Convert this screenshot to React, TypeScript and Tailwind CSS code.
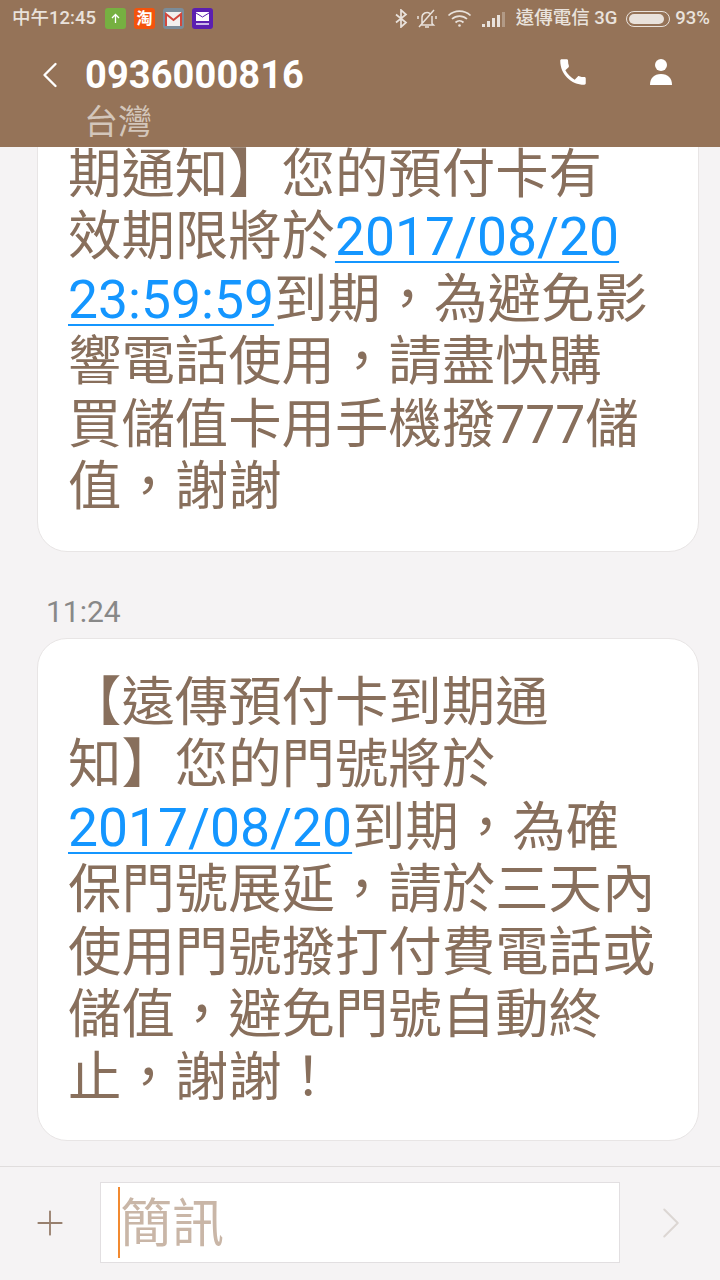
import { ChevronLeft, ChevronRight, Plus } from 'lucide-react';

const Link = ({ children }: { children: string }) => (
  <span className="text-[#1496ff] underline decoration-2 underline-offset-[6px]">{children}</span>
);

function Line({ children }: { children: React.ReactNode }) {
  return <div className="h-[62.5px] leading-[62.5px] whitespace-nowrap">{children}</div>;
}

function Bubble({ children, className }: { children: React.ReactNode; className: string }) {
  return (
    <div className={`mx-[37px] w-[662px] shrink-0 rounded-[30px] border border-[#e8e5e5] bg-white pl-[30px] text-[53.4px] text-[#886f5c] ${className}`}>
      {children}
    </div>
  );
}

function StatusBar() {
  return (
    <div className="flex h-[36px] items-center pl-[12px] pr-[10px] pt-[1px] text-[18.5px] font-medium text-[#e9e2dc]">
      <span>中午12:45</span>
      <div className="ml-[9px] flex items-center gap-[8px]">
        <div className="flex h-[21px] w-[21px] items-center justify-center rounded-[3px] bg-[#76b041]">
          <svg width="13" height="13" viewBox="0 0 13 13" fill="none" stroke="white" strokeWidth="1.3">
            <path d="M6.500 11V2.500M3 6l3.500-3.500L10 6" />
          </svg>
        </div>
        <div className="flex h-[21px] w-[21px] items-center justify-center rounded-[3px] bg-[#f4530c] text-[16px] font-bold leading-none text-white">
          淘
        </div>
        <div className="flex h-[21px] w-[21px] items-center justify-center rounded-[3px] bg-[#7b8c99]">
          <svg width="17" height="14" viewBox="0 0 17 14">
            <rect width="17" height="14" rx="1" fill="#f2f0ee" />
            <path d="M1 14V2l7.500 6L16 2v12" fill="none" stroke="#d2473c" strokeWidth="2" />
          </svg>
        </div>
        <div className="flex h-[21px] w-[21px] flex-col items-center justify-center gap-[2px] rounded-[3px] bg-[#5b1fb0]">
          <svg width="13" height="9" viewBox="0 0 13 9">
            <rect width="13" height="9" fill="white" />
            <path d="M0 1l6.500 4L13 1" fill="none" stroke="#5b1fb0" strokeWidth="1" />
          </svg>
          <div className="h-[2px] w-[13px] bg-[#cbb8ea]" />
        </div>
      </div>
      <div className="ml-auto flex items-center">
        <svg width="14" height="19" viewBox="0 0 14 19" fill="none" stroke="#e9e2dc" strokeWidth="1.700">
          <path d="M2 5.500l10 8-5 4.500V1l5 4.500-10 8" />
        </svg>
        <svg className="ml-[8px]" width="22" height="20" viewBox="0 0 22 20" fill="none" stroke="#e9e2dc" strokeWidth="1.500">
          <path d="M6 14.500V8.500a5 5 0 0 1 8-4M16 7v7.500l1.500 1.500h-13M9 18h4M2 10V7M20 10V7M3 18 18 1" />
        </svg>
        <svg className="ml-[9px]" width="26" height="19" viewBox="0 0 25 19" fill="none" stroke="#e9e2dc" strokeWidth="1.700">
          <path d="M1 6.500a16 16 0 0 1 22 0M4.500 10a11 11 0 0 1 15 0M8 13.500a6 6 0 0 1 8 0" />
          <circle cx="12" cy="16.500" r="1.300" fill="#e9e2dc" stroke="none" />
        </svg>
        <svg className="ml-[9px]" width="23" height="16" viewBox="0 0 23 16" fill="#e9e2dc">
          <rect x="0" y="13" width="3" height="3" />
          <rect x="5" y="10" width="3" height="6" />
          <rect x="10" y="7" width="3" height="9" />
          <rect x="15" y="4" width="3" height="12" />
          <rect x="20" y="1" width="3" height="15" opacity="0.35" />
        </svg>
        <span className="ml-[11px]">遠傳電信 3G</span>
        <div className="ml-[9px] h-[16px] w-[44px] rounded-full border border-[#e9e2dc] p-[2px]">
          <div className="h-full w-[92%] rounded-full bg-[#e9e2dc]" />
        </div>
        <span className="ml-[5px]">93%</span>
      </div>
    </div>
  );
}

export default function App() {
  return (
    <div className="flex h-[1280px] w-[720px] flex-col overflow-hidden bg-[#f5f3f4] font-['Roboto','Noto_Sans_CJK_TC',sans-serif]">
      {/* Header */}
      <div className="relative z-10 h-[147px] shrink-0 bg-[#957358]">
        <StatusBar />
        <div className="mt-[8px] flex h-[62px] items-center pl-[28px] pr-[48px]">
          <ChevronLeft className="h-[44px] w-[44px] text-white" strokeWidth={1.300} />
          <span className="ml-[13px] text-[38px] font-bold tracking-[0.1px] text-white">0936000816</span>
          <svg className="ml-auto -translate-y-[3px]" width="34" height="34" viewBox="0 0 24 24" fill="white">
            <path d="M6.600 10.800c1.400 2.800 3.800 5.100 6.600 6.600l2.200-2.200c.3-.3.700-.4 1-.2 1.100.4 2.300.6 3.600.6.600 0 1 .4 1 1V20c0 .6-.4 1-1 1C10.600 21 3 13.400 3 4c0-.6.400-1 1-1h3.500c.6 0 1 .4 1 1 0 1.300.2 2.500.6 3.600.1.300 0 .7-.2 1z" />
          </svg>
          <svg className="ml-[60px] -translate-y-[3px]" width="22" height="26" viewBox="0 0 22 26" fill="white">
            <circle cx="11" cy="6" r="6" />
            <path d="M0 26c0-7 4-11 11-11s11 4 11 11z" />
          </svg>
        </div>
        <div className="pl-[84px] text-[34px] leading-[32px] text-[#d3c6bb]">台灣</div>
      </div>

      {/* Messages */}
      <div className="flex min-h-0 flex-1 flex-col justify-end overflow-hidden">
        <Bubble className="pt-[40px] pb-[32px]">
          <Line>期通知】您的預付卡有</Line>
          <Line>效期限將於<Link>2017/08/20</Link></Line>
          <Line><Link>23:59:59</Link>到期{'\uFF0C'}為避免影</Line>
          <Line>響電話使用{'\uFF0C'}請盡快購</Line>
          <Line>買儲值卡用手機撥777儲</Line>
          <Line>值{'\uFF0C'}謝謝</Line>
        </Bubble>
        <div className="ml-[46px] mt-[43px] h-[43px] shrink-0 text-[30px] leading-[34px] text-[#888888]">11:24</div>
        <Bubble className="pt-[33px] pb-[31px]">
          <Line>【遠傳預付卡到期通</Line>
          <Line>知】您的門號將於</Line>
          <Line><Link>2017/08/20</Link>到期{'\uFF0C'}為確</Line>
          <Line>保門號展延{'\uFF0C'}請於三天內</Line>
          <Line>使用門號撥打付費電話或</Line>
          <Line>儲值{'\uFF0C'}避免門號自動終</Line>
          <Line>止{'\uFF0C'}謝謝{'\uFF01'}</Line>
        </Bubble>
        <div className="h-[25px] shrink-0" />
      </div>

      {/* Composer */}
      <div className="flex h-[114px] shrink-0 items-start border-t border-[#e0dddd] pt-[15px]">
        <div className="flex h-[81px] w-[100px] shrink-0 items-center pl-[30px]">
          <Plus className="h-[40px] w-[40px] text-[#977f6d]" strokeWidth={1.100} />
        </div>
        <div className="flex h-[81px] w-[520px] items-center border border-[#e2dfe1] bg-white pl-[17px]">
          <div className="h-[71px] w-[2px] bg-[#f28a30]" />
          <span className="pt-[4px] text-[52px] leading-none text-[#c9b6a7]">簡訊</span>
        </div>
        <div className="flex h-[81px] flex-1 items-center pl-[24px]">
          <ChevronRight className="h-[54px] w-[54px] text-[#dcd6d3]" strokeWidth={0.900} />
        </div>
      </div>
    </div>
  );
}
